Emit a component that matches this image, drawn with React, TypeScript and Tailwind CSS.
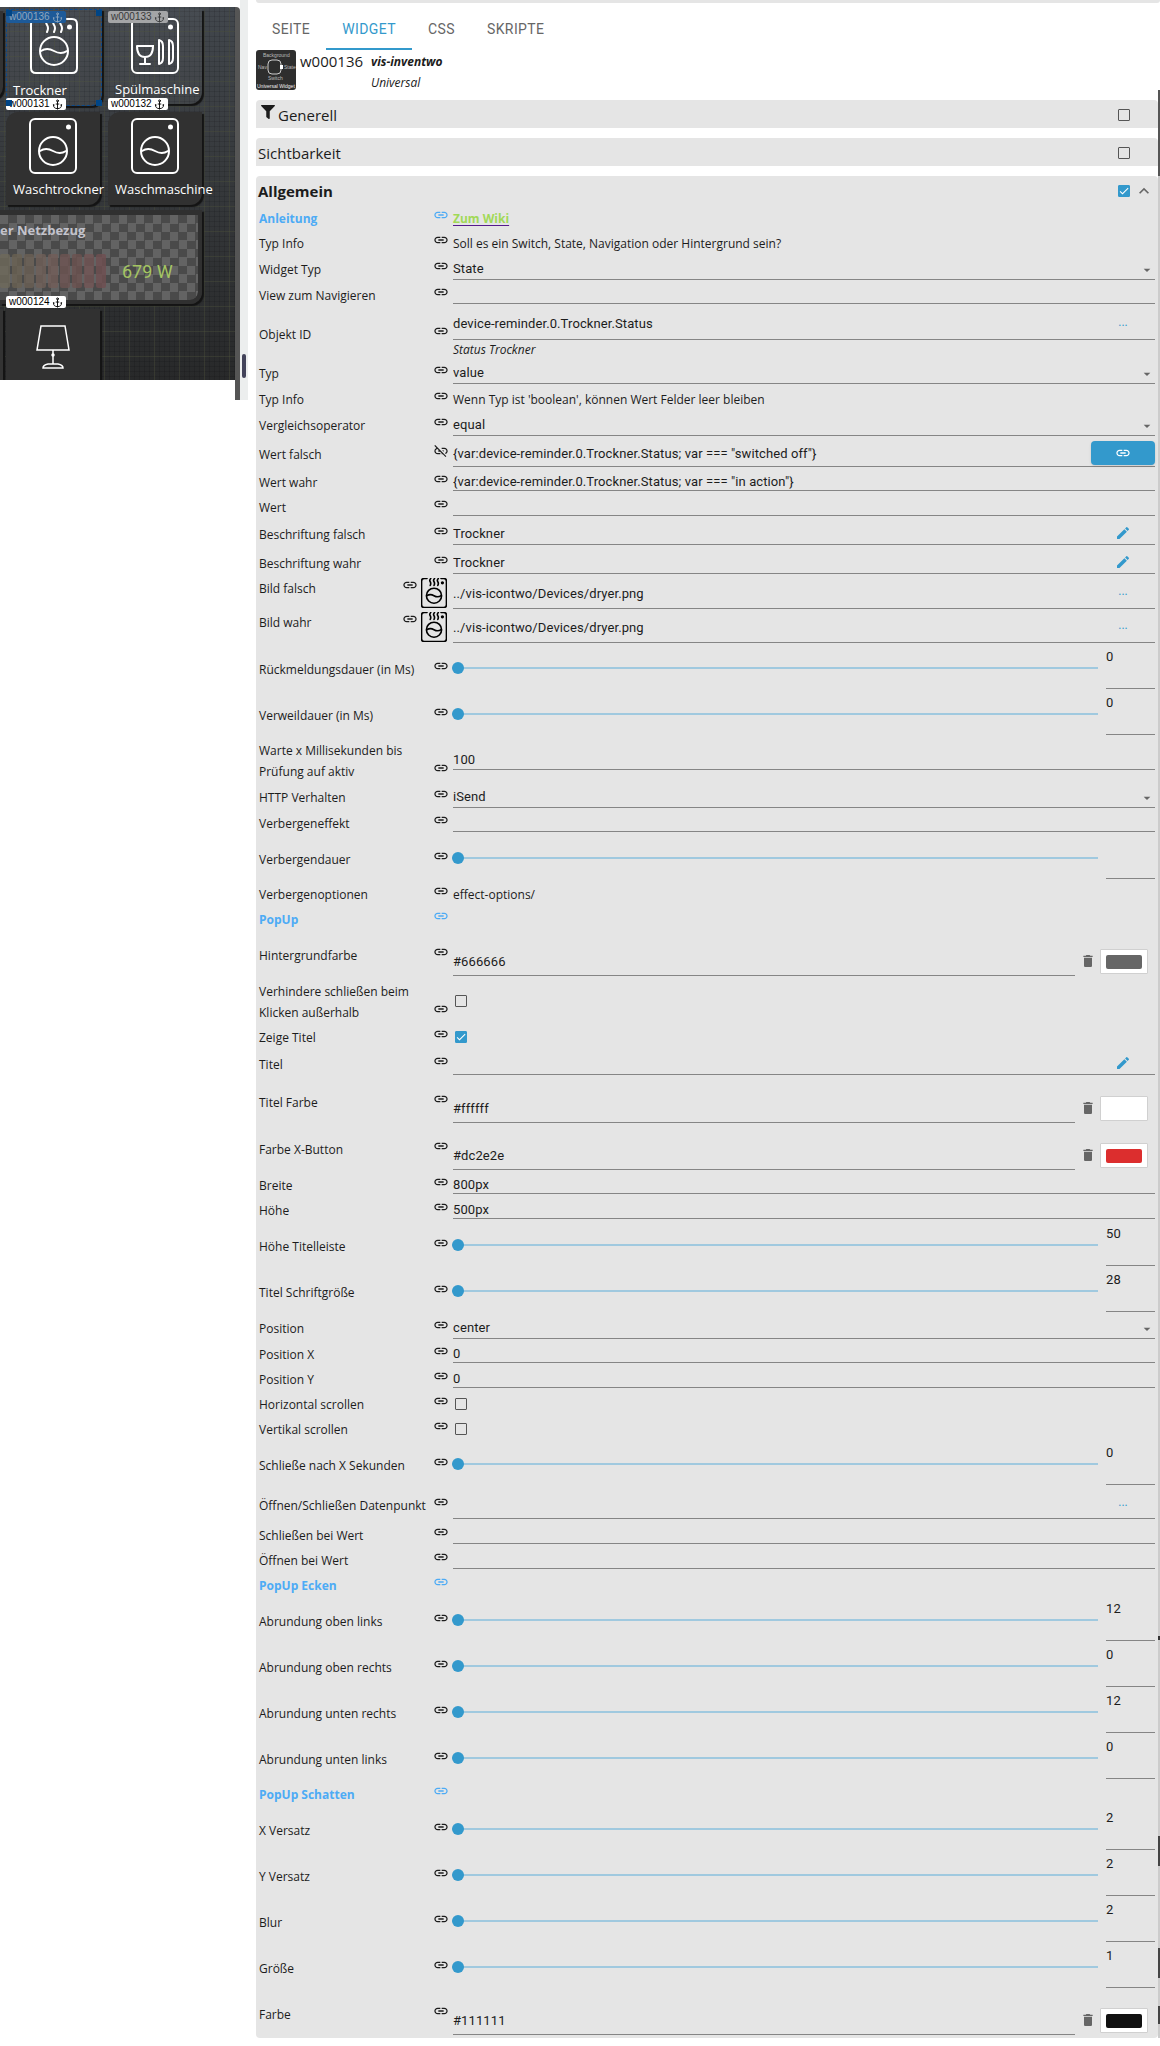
import type { ReactNode } from "react";
import { MdArrowDropDown, MdCheck, MdDelete, MdEdit, MdExpandLess, MdLink, MdLinkOff } from "react-icons/md";
import { FaFilter } from "react-icons/fa";
import { Anchor } from "lucide-react";

type Kind = "heading" | "wiki" | "info" | "text" | "select" | "object" | "binding" | "translate" | "image" | "slider" | "check" | "color" | "datapoint";

type Field = { kind: Kind; label: string; value?: string; checked?: boolean };

const FIELDS: Field[] = [
  { kind: "wiki", label: "Anleitung", value: "Zum Wiki" },
  { kind: "info", label: "Typ Info", value: "Soll es ein Switch, State, Navigation oder Hintergrund sein?" },
  { kind: "select", label: "Widget Typ", value: "State" },
  { kind: "text", label: "View zum Navigieren" },
  { kind: "object", label: "Objekt ID", value: "device-reminder.0.Trockner.Status" },
  { kind: "select", label: "Typ", value: "value" },
  { kind: "info", label: "Typ Info", value: "Wenn Typ ist 'boolean', können Wert Felder leer bleiben" },
  { kind: "select", label: "Vergleichsoperator", value: "equal" },
  { kind: "binding", label: "Wert falsch", value: '{var:device-reminder.0.Trockner.Status; var === "switched off"}' },
  { kind: "text", label: "Wert wahr", value: '{var:device-reminder.0.Trockner.Status; var === "in action"}' },
  { kind: "text", label: "Wert" },
  { kind: "translate", label: "Beschriftung falsch", value: "Trockner" },
  { kind: "translate", label: "Beschriftung wahr", value: "Trockner" },
  { kind: "image", label: "Bild falsch", value: "../vis-icontwo/Devices/dryer.png" },
  { kind: "image", label: "Bild wahr", value: "../vis-icontwo/Devices/dryer.png" },
  { kind: "slider", label: "Rückmeldungsdauer (in Ms)", value: "0" },
  { kind: "slider", label: "Verweildauer (in Ms)", value: "0" },
  { kind: "text", label: "Warte x Millisekunden bis Prüfung auf aktiv", value: "100" },
  { kind: "select", label: "HTTP Verhalten", value: "iSend" },
  { kind: "text", label: "Verbergeneffekt" },
  { kind: "slider", label: "Verbergendauer", value: "" },
  { kind: "info", label: "Verbergenoptionen", value: "effect-options/" },
  { kind: "heading", label: "PopUp" },
  { kind: "color", label: "Hintergrundfarbe", value: "#666666" },
  { kind: "check", label: "Verhindere schließen beim Klicken außerhalb" },
  { kind: "check", label: "Zeige Titel", checked: true },
  { kind: "translate", label: "Titel" },
  { kind: "color", label: "Titel Farbe", value: "#ffffff" },
  { kind: "color", label: "Farbe X-Button", value: "#dc2e2e" },
  { kind: "text", label: "Breite", value: "800px" },
  { kind: "text", label: "Höhe", value: "500px" },
  { kind: "slider", label: "Höhe Titelleiste", value: "50" },
  { kind: "slider", label: "Titel Schriftgröße", value: "28" },
  { kind: "select", label: "Position", value: "center" },
  { kind: "text", label: "Position X", value: "0" },
  { kind: "text", label: "Position Y", value: "0" },
  { kind: "check", label: "Horizontal scrollen" },
  { kind: "check", label: "Vertikal scrollen" },
  { kind: "slider", label: "Schließe nach X Sekunden", value: "0" },
  { kind: "datapoint", label: "Öffnen/Schließen Datenpunkt" },
  { kind: "text", label: "Schließen bei Wert" },
  { kind: "text", label: "Öffnen bei Wert" },
  { kind: "heading", label: "PopUp Ecken" },
  { kind: "slider", label: "Abrundung oben links", value: "12" },
  { kind: "slider", label: "Abrundung oben rechts", value: "0" },
  { kind: "slider", label: "Abrundung unten rechts", value: "12" },
  { kind: "slider", label: "Abrundung unten links", value: "0" },
  { kind: "heading", label: "PopUp Schatten" },
  { kind: "slider", label: "X Versatz", value: "2" },
  { kind: "slider", label: "Y Versatz", value: "2" },
  { kind: "slider", label: "Blur", value: "2" },
  { kind: "slider", label: "Größe", value: "1" },
  { kind: "color", label: "Farbe", value: "#111111" },
];

const ROW_HEIGHT: Record<Kind, string> = {
  heading: "min-h-[25px]",
  wiki: "min-h-[25px]",
  info: "min-h-[25px]",
  text: "min-h-[25px]",
  check: "min-h-[25px]",
  select: "min-h-[27px]",
  object: "min-h-[52px]",
  binding: "min-h-[31px]",
  translate: "min-h-[29px]",
  image: "min-h-[34px]",
  slider: "min-h-[46px]",
  color: "min-h-[47px]",
  datapoint: "min-h-[35px]",
};

const INPUT = "min-w-0 flex-1 border-b border-[#858585] bg-transparent p-0 font-[Roboto,sans-serif] text-[13px] tracking-[0.1px] outline-none";
const BARE_INPUT = "min-w-0 flex-1 bg-transparent font-[Roboto,sans-serif] text-[13px] tracking-[0.1px] outline-none";

function Tick({ id, checked, label }: { id?: string; checked?: boolean; label?: string }) {
  return (
    <span className="relative block size-3 shrink-0">
      <input
        id={id}
        aria-label={label}
        type="checkbox"
        defaultChecked={checked}
        className="peer block size-3 appearance-none rounded-[1px] border border-[#555] checked:border-[#39c] checked:bg-[#39c]"
      />
      <MdCheck className="pointer-events-none absolute inset-0 hidden size-3 text-white peer-checked:block" />
    </span>
  );
}

function Dots() {
  return (
    <button aria-label="Auswählen" className="h-5 w-16 pb-1 font-[Roboto,sans-serif] text-[12px] leading-none text-[#39c]">
      ...
    </button>
  );
}

function Dryer({ steam = true, className, width = 2 }: { steam?: boolean; className: string; width?: number }) {
  return (
    <svg viewBox="0 0 48 56" className={className} fill="none" stroke="currentColor" strokeWidth={width} strokeLinecap="round" preserveAspectRatio="none">
      {steam ? (
        <>
          <path d="M11 1H6Q1 1 1 6V50Q1 55 6 55H42Q47 55 47 50V6Q47 1 42 1H37" />
          <path d="M18 1q-3 3 -1 6t0 7M25 1q-3 3 -1 6t0 7M32 1q-3 3 -1 6t0 7" />
        </>
      ) : (
        <rect x="1" y="1" width="46" height="54" rx="5" />
      )}
      <circle cx="39.500" cy="9" r="1.500" fill="currentColor" />
      <circle cx="24" cy="33" r="14" />
      <path d="M11 33Q17 29 24 33T37 33" />
    </svg>
  );
}

function Control({ field, id }: { field: Field; id: string }): ReactNode {
  const { kind, value } = field;
  switch (kind) {
    case "wiki":
      return (
        <a href="#wiki" className="font-bold text-[#a1d957] underline decoration-[#551a8b] underline-offset-2">
          {value}
        </a>
      );
    case "info":
      return <span id={id}>{value}</span>;
    case "text":
      return <input id={id} defaultValue={value} className={`${INPUT} mb-[2px] h-[19px]`} />;
    case "select":
      return (
        <span className="relative mb-[2px] flex min-w-0 flex-1">
          <select id={id} className={`${INPUT} h-[22px] appearance-none`}>
            <option>{value}</option>
          </select>
          <MdArrowDropDown className="pointer-events-none absolute top-1 right-0 size-4 text-[#666]" />
        </span>
      );
    case "object":
      return (
        <div className="min-w-0 flex-1">
          <div className="flex h-8 items-center border-b border-[#858585]">
            <input id={id} defaultValue={value} className={BARE_INPUT} />
            <Dots />
          </div>
          <div className="h-5 leading-5 italic">Status Trockner</div>
        </div>
      );
    case "binding":
      return (
        <div className="mb-px flex h-[26px] min-w-0 flex-1 border-b border-[#858585]">
          <input id={id} defaultValue={value} className={BARE_INPUT} />
          <button aria-label="Bindung bearbeiten" className="flex h-6 w-16 items-center justify-center rounded bg-[#39c] text-white shadow">
            <MdLink className="size-4" />
          </button>
        </div>
      );
    case "translate":
      return (
        <div className="mb-[2px] flex h-[23px] min-w-0 flex-1 items-center border-b border-[#858585]">
          <input id={id} defaultValue={value} className={BARE_INPUT} />
          <button aria-label="Übersetzen" className="flex w-16 justify-center text-[#39c]">
            <MdEdit className="size-4" />
          </button>
        </div>
      );
    case "image":
    case "datapoint":
      return (
        <div className="mb-px flex h-7 min-w-0 flex-1 items-center border-b border-[#858585] pb-[2px]">
          <input id={id} defaultValue={value} className={BARE_INPUT} />
          <Dots />
        </div>
      );
    case "slider":
      return (
        <div className="-ml-px flex min-w-0 flex-1 gap-2">
          <div className="flex h-[46px] min-w-0 flex-1 items-center pb-[2px]">
            <input
              id={id}
              type="range"
              defaultValue={0}
              className="h-[2px] w-full appearance-none bg-[#a0c9df] [&::-webkit-slider-thumb]:size-3 [&::-webkit-slider-thumb]:appearance-none [&::-webkit-slider-thumb]:rounded-full [&::-webkit-slider-thumb]:bg-[#39c]"
            />
          </div>
          <input
            aria-label={`${field.label} Wert`}
            defaultValue={value}
            className="h-[43px] w-[49px] border-b border-[#858585] bg-transparent pb-[22px] font-[Roboto,sans-serif] text-[13px] tracking-[0.1px] outline-none"
          />
        </div>
      );
    case "check":
      return (
        <span className="mb-[2px] ml-[2px]">
          <Tick id={id} checked={field.checked} />
        </span>
      );
    case "color":
      return (
        <div className="mt-[11px] flex h-[30px] min-w-0 flex-1 items-start">
          <input id={id} defaultValue={value} className={`${INPUT} h-[30px] pt-[2px]`} />
          <button aria-label="Farbe löschen" className="flex h-[30px] w-[25px] items-center justify-center pl-px text-[#666]">
            <MdDelete className="size-4" />
          </button>
          <button aria-label="Farbe wählen" className="mr-[7px] mt-[3px] flex h-[25px] w-12 items-center justify-center rounded-[1px] border border-[#d0d0d0] bg-white">
            <span className="block h-[14px] w-9 rounded-[2px]" style={{ backgroundColor: value }} />
          </button>
        </div>
      );
    default:
      return null;
  }
}

function Row({ field, index }: { field: Field; index: number }) {
  const id = `field-${index}`;
  const titled = field.kind === "heading" || field.kind === "wiki";
  const image = field.kind === "image";
  const Icon = field.kind === "binding" ? MdLinkOff : MdLink;
  return (
    <div className={`flex items-center gap-1 pr-[3px] pl-[3px] ${ROW_HEIGHT[field.kind]} ${titled ? "text-[#4dabf5]" : ""}`}>
      <div className={`flex w-[190px] shrink-0 ${image ? "items-start self-stretch" : "items-end py-[2px]"}`}>
        {titled ? (
          <span className="flex-1 font-bold">{field.label}</span>
        ) : (
          <label htmlFor={id} className="min-w-0 flex-1">
            {field.label}
          </label>
        )}
        <button aria-label="Bindung" className="flex h-[21px] w-4 shrink-0 items-center pb-[7px]">
          <Icon className="size-4 shrink-0" />
        </button>
        {image && <Dryer className="mr-[2px] ml-[3px] h-[30px] w-[26px] text-black" width={3} />}
      </div>
      <Control field={field} id={id} />
    </div>
  );
}

function Tag({ id, tone = "bg-white text-black" }: { id: string; tone?: string }) {
  return (
    <span className={`flex h-3 w-[60px] items-center gap-[2px] rounded-[2px] pl-[3px] font-['Liberation_Sans',sans-serif] text-[10px] leading-3 ${tone}`}>
      {id}
      <Anchor className="size-[11px] shrink-0" strokeWidth={2} />
    </span>
  );
}

const BARS = ["bg-[#6f6a5b]", "bg-[#6a6152]", "bg-[#6b6055]", "bg-[#706058]", "bg-[#735d58]", "bg-[#6d5452]", "bg-[#6c5250]", "bg-[#735555]", "bg-[#704f51]"];

function Canvas() {
  return (
    <div className="w-[248px] shrink-0">
      <div className="flex h-[400px] bg-[#eceeee]">
        <div className="flex w-60 bg-white pt-[7px]">
          <div className="relative h-[373px] w-[235px] overflow-hidden bg-[linear-gradient(#54584266_1px,transparent_1px),linear-gradient(90deg,#54584266_1px,transparent_1px),linear-gradient(#0000001c_1px,transparent_1px),linear-gradient(90deg,#0000001c_1px,transparent_1px),linear-gradient(#42474d,#36393c_45%,#28292a)] bg-[size:25px_25px,25px_25px,5px_5px,5px_5px,auto] bg-[position:0_24px,4px_0,0_4px,4px_0,0_0] text-white">
            <div className="absolute top-1 -left-24 h-[88px] w-[99px] rounded-br-xl bg-[#333] shadow-[2px_2px_1px_#141414]" />
            <div className="absolute top-[302px] -left-24 h-20 w-[99px] bg-[#333] shadow-[2px_2px_1px_#141414]" />
            <div className="absolute top-0.5 left-1.5 flex h-[97px] w-24 flex-col items-center rounded-br-xl border border-dashed border-[#0c4a8c] bg-[#ffffff08] pt-2 shadow-[2px_2px_1px_#141414]">
              <Dryer className="h-14 w-12" />
              <span className="w-full pt-[6px] pl-[6px] text-[13px] leading-5">Trockner</span>
            </div>
            <div className="absolute top-0.5 left-[108px] flex h-[95px] w-[94px] flex-col items-center rounded-br-xl bg-[#ffffff08] pt-[9px] shadow-[2px_2px_1px_#141414]">
              <svg viewBox="0 0 48 56" className="h-14 w-12" fill="none" stroke="currentColor" strokeWidth="2" strokeLinecap="round">
                <rect x="1" y="1" width="46" height="54" rx="5" />
                <circle cx="39.500" cy="9" r="1.500" fill="currentColor" />
                <path d="M6 28H22Q22 39 14 39Q6 39 6 28M14 39V46M9 46H19M28 22V46M28 22Q32 23 32 28V40Q32 45 28 46M38 22V46M38 22Q42 23 42 28V40Q42 45 38 46" />
              </svg>
              <span className="w-full pt-[5px] pl-[7px] text-[13px] leading-5">Spülmaschine</span>
            </div>
            {["Waschtrockner", "Waschmaschine"].map((name, i) => (
              <div
                key={name}
                className={`absolute top-[105px] flex h-[93px] w-[94px] flex-col items-center rounded-tl-xl rounded-br-xl bg-[#313131] pt-[6px] shadow-[2px_2px_1px_#141414] ${i ? "left-[108px]" : "left-1.5"}`}
              >
                <Dryer steam={false} className="h-14 w-12" />
                <span className="w-full pt-[5px] pl-[7px] text-[13px] leading-5 whitespace-nowrap">{name}</span>
              </div>
            ))}
            <div className="absolute top-[203px] left-0 h-[94px] w-[202px] rounded-br-xl border-r-4 border-b-4 border-t-[5px] border-[#303030] bg-[conic-gradient(#4a4a4a_25%,#636363_0_50%,#4a4a4a_0_75%,#636363_0)] bg-[size:17px_17px] bg-origin-padding bg-clip-padding shadow-[2px_2px_1px_#141414]">
              <div className="pt-[5px] text-[13px] leading-5 font-bold text-[#c3c3cc]">er Netzbezug</div>
              <div className="flex items-center pt-[14px]">
                <div className="flex gap-[2px] opacity-80">
                  {BARS.map((c) => (
                    <span key={c} className={`h-[34px] w-[10px] rounded-[2px] ${c}`} />
                  ))}
                </div>
                <span className="pl-4 font-[Roboto,sans-serif] text-[18px] text-[#a5c562]">679 W</span>
              </div>
            </div>
            <div className="absolute top-[302px] left-1.5 flex h-20 w-[94px] justify-center bg-[#313131] pt-[15px] shadow-[2px_2px_1px_#141414]">
              <svg viewBox="0 0 34 46" className="h-[46px] w-[34px]" fill="none" stroke="currentColor" strokeWidth="1.500">
                <path d="M5 2H29L33 26H1ZM17 26V40M7 44Q7 41 12 40H22Q27 41 27 44Z" />
                <circle cx="17" cy="31" r="1" fill="currentColor" />
              </svg>
            </div>
            <div className="absolute top-1 left-1.5">
              <Tag id="w000136" tone="bg-[#1d5a99] text-[#8fa6bd]" />
            </div>
            <div className="absolute top-1 left-[108px]">
              <Tag id="w000133" tone="bg-[#a4a5a7] text-[#38393a]" />
            </div>
            <div className="absolute top-[91px] left-1.5">
              <Tag id="w000131" />
            </div>
            <div className="absolute top-[91px] left-[108px]">
              <Tag id="w000132" />
            </div>
            <div className="absolute top-[289px] left-1.5">
              <Tag id="w000124" />
            </div>
            <span className="absolute top-[3px] left-1.5 size-1.5 bg-[#004586]" />
            <span className="absolute top-[3px] left-24 size-1.5 bg-[#004586]" />
            <span className="absolute top-[93px] left-1.5 size-1.5 bg-[#004586]" />
            <span className="absolute top-[93px] left-24 size-1.5 bg-[#004586]" />
          </div>
          <div className="h-full w-[5px] rounded-tr bg-[#555]" />
        </div>
        <div className="flex flex-1 flex-col justify-end pb-[22px]">
          <div className="ml-[2px] h-6 w-1 rounded-sm bg-[#43435a]" />
        </div>
      </div>
    </div>
  );
}

const TABS = ["SEITE", "WIDGET", "CSS", "SKRIPTE"];

export default function App() {
  return (
    <div className="flex items-start bg-white font-['Open_Sans','Noto_Sans',sans-serif] text-[12px] leading-[21px] text-[#1c1c1c]">
      <Canvas />
      <main className="min-w-0 flex-1 pb-2 pl-2">
        <div className="h-[3px] rounded-b bg-[#e5e5e5]" />
        <div role="tablist" className="flex h-[47px] font-[Roboto,sans-serif] text-[14px] tracking-[0.4px] text-[#666]">
          {TABS.map((tab) => (
            <button
              key={tab}
              role="tab"
              aria-selected={tab === "WIDGET"}
              className="border-b-2 border-transparent px-4 pt-2 aria-selected:border-[#39c] aria-selected:text-[#39c]"
            >
              {tab}
            </button>
          ))}
        </div>
        <header className="flex h-[50px] items-start gap-1">
          <svg viewBox="0 0 40 40" className="size-10 rounded-[3px] bg-[#2e2e2e] font-['Liberation_Sans',sans-serif] text-[5px]" fill="none">
            <rect x="12" y="10" width="13" height="14" rx="4" stroke="#ccc" />
            <rect x="24" y="15" width="3" height="4" fill="#fff" />
            <text x="7" y="7" fill="#bbb">Background</text>
            <text x="2" y="19" fill="#bbb">Nav</text>
            <text x="28" y="19" fill="#bbb">State</text>
            <text x="12" y="30" fill="#bbb">Switch</text>
            <text x="1" y="38" fill="#eee">Universal Widget</text>
          </svg>
          <span className="w-[67px] pt-px text-[15px]">w000136</span>
          <span className="pt-px italic">
            <b className="block">vis-inventwo</b>
            Universal
          </span>
        </header>
        <div className="flex">
          <div className="min-w-0 flex-1">
            <section className="mb-[10px] flex h-7 items-center rounded-t bg-[#e5e5e5] pr-7 pl-[5px] text-[15px]">
              <FaFilter className="mb-1 size-[14px]" />
              <h2 className="flex-1 pt-[2px] pl-[3px]">Generell</h2>
              <span className="pt-[2px]">
                <Tick label="Generell" />
              </span>
            </section>
            <section className="mb-[10px] flex h-7 items-center rounded-t bg-[#e5e5e5] pr-7 pl-[2px] text-[15px]">
              <h2 className="flex-1 pt-[2px]">Sichtbarkeit</h2>
              <span className="pt-[2px]">
                <Tick label="Sichtbarkeit" />
              </span>
            </section>
            <section className="rounded bg-[#e5e5e5]">
              <div className="flex h-[30px] items-center pr-[6px] pl-[2px] text-[15px]">
                <h2 className="flex-1 font-bold">Allgemein</h2>
                <Tick label="Allgemein" checked />
                <button aria-label="Einklappen" className="ml-[6px] pb-px">
                  <MdExpandLess className="size-4 scale-125 text-[#666]" />
                </button>
              </div>
              {FIELDS.map((field, i) => (
                <Row key={i} field={field} index={i} />
              ))}
            </section>
          </div>
          <div className="w-[2px] bg-[linear-gradient(transparent_76px,#ccc_76px)]">
            <div className="-mt-[10px] h-[86px] bg-[#555]" />
            <div className="mt-[1460px] h-1 bg-[#333]" />
            <div className="mt-[196px] h-[30px] bg-[#444]" />
            <div className="mt-[82px] h-[30px] bg-[#444]" />
            <div className="mt-7 h-[18px] bg-[#444]" />
          </div>
        </div>
      </main>
    </div>
  );
}
